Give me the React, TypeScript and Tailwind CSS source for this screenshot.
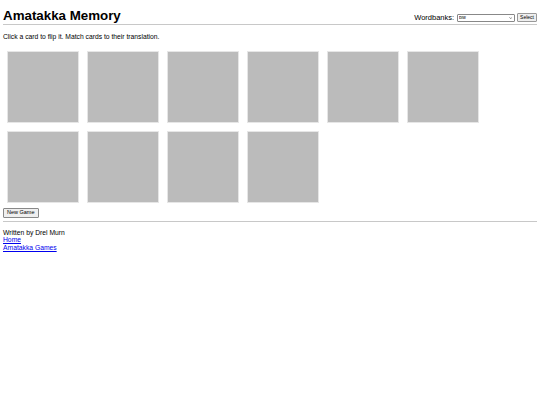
import React from "react";

const CARDS = Array.from({ length: 10 }, (_, i) => i);

export default function App() {
  return (
    <div className="px-[3px] pt-[8px] font-['Liberation_Sans',Arial,sans-serif] text-[6.75px] leading-[1.15] text-black">
      <div className="flex items-end justify-between border-b border-[#c8c8c8] pb-[1px]">
        <h1 className="text-[13.33px] font-bold leading-[1.15]">Amatakka Memory</h1>
        <form className="flex items-center gap-[2px] pb-[1px]">
          <label className="mr-[1px] text-[7.5px]">Wordbanks:</label>
          <div className="relative">
            <select
              defaultValue="blw"
              className="block h-[8px] w-[58px] appearance-none rounded-[1px] border border-[#888] bg-white px-[1px] text-[4.5px] leading-none"
            >
              <option value="blw">blw</option>
            </select>
            <svg
              viewBox="0 0 8 5"
              className="pointer-events-none absolute right-[3px] top-[3px] h-[2px] w-[3.5px]"
              aria-hidden="true"
            >
              <path d="M1 1l3 3 3-3" fill="none" stroke="#333" strokeWidth="1.6" />
            </svg>
          </div>
          <button
            type="button"
            className="h-[9px] rounded-[1px] border border-[#999] bg-[#efefef] px-[2px] text-[5px] leading-none"
          >
            Select
          </button>
        </form>
      </div>

      <p className="mt-[8px]">Click a card to flip it. Match cards to their translation.</p>

      <div className="mt-[6px] flex flex-wrap">
        {CARDS.map((i) => (
          <div
            key={i}
            className="m-[4px] h-[72px] w-[72px] border border-[#e6e6e6] bg-[#bbbbbb]"
          />
        ))}
      </div>

      <button
        type="button"
        className="mt-[1px] rounded-[1px] border border-[#888] bg-[#efefef] px-[3px] py-[1px] text-[5.5px] leading-none"
      >
        New Game
      </button>

      <hr className="mt-[3px] border-t border-[#c8c8c8]" />

      <footer className="mt-[7px]">
        <div>Written by Drel Murn</div>
        <a href="#" className="block text-[#0000ee] underline">Home</a>
        <a href="#" className="block text-[#0000ee] underline">Amatakka Games</a>
      </footer>
    </div>
  );
}
